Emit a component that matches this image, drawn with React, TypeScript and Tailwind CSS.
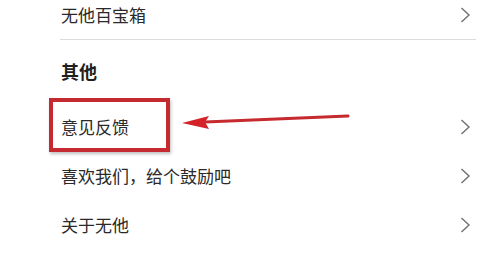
import { ReactNode } from "react";

const font = { fontFamily: '"Noto Sans CJK SC", "Noto Sans", sans-serif' };

function Chevron() {
  return (
    <svg width="11" height="16" viewBox="0 0 11 16" fill="none">
      <polyline points="1.5,1 9,8 1.5,15" stroke="#707070" strokeWidth="1.4" strokeLinejoin="miter" />
    </svg>
  );
}

function Row({ children }: { children: ReactNode }) {
  return (
    <div className="flex h-[49px] items-center justify-between pr-[5px]">
      <span className="text-[17px] text-[#2a2a2a]">{children}</span>
      <Chevron />
    </div>
  );
}

export default function App() {
  return (
    <div className="relative h-[253px] w-[491px] overflow-hidden bg-white" style={font}>
      <div className="mt-[-10px] pl-[61px] pr-[15px]">
        <Row>无他百宝箱</Row>
        <div className="ml-[-1px] h-px bg-[#dcdcdc]" />
        <div className="flex h-[62px] items-center text-[18px] font-bold text-[#1f1f1f]">其他</div>
        <Row>意见反馈</Row>
        <Row>喜欢我们，给个鼓励吧</Row>
        <Row>关于无他</Row>
      </div>

      {/* annotation */}
      <div className="absolute left-[49px] top-[98px] h-[54px] w-[121px] border-4 border-[#c42a2f] shadow-[1px_2px_3px_rgba(0,0,0,0.25)]" />
      <svg className="absolute left-0 top-0" width="491" height="253">
        <line x1="205" y1="122" x2="348" y2="116" stroke="#c62a2f" strokeWidth="3" strokeLinecap="round" />
        <polygon points="182,123 209,116 205,122 209,129" fill="#d42228" />
      </svg>
    </div>
  );
}
